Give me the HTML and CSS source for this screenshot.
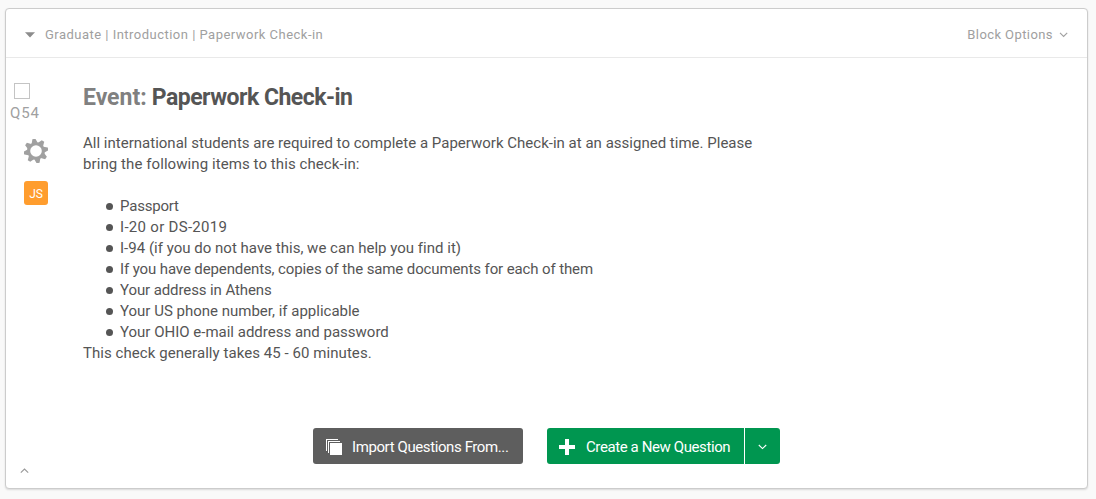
FILE: index.html
```html
<!DOCTYPE html>
<html lang="en">
<head>
<meta charset="utf-8">
<title>Survey Editor</title>
<link rel="stylesheet" href="styles.css">
</head>
<body>
<main class="block">
  <header class="block-header">
    <div class="block-title"><svg class="caret" width="10" height="6" viewBox="0 0 10 6"><path d="M0 .2H10L5 5.6Z" fill="#8c8c8c"/></svg><span class="crumbs">Graduate | Introduction | Paperwork Check-in</span></div>
    <div class="block-options"><span>Block Options</span><svg width="10" height="6" viewBox="0 0 10 6" fill="none" stroke="#a0a0a0" stroke-width="1.1"><path d="M1 .8L4.6 4.5L8.2 .8"/></svg></div>
  </header>
  <section class="question">
    <aside class="side">
      <span class="checkbox"></span>
      <span class="qid">Q54</span>
      <svg class="gear" width="24" height="24" viewBox="-12 -12 24 24">
        <circle r="7.4" fill="none" stroke="#a0a0a0" stroke-width="3.2"/>
        <g fill="#a0a0a0" transform="rotate(-10)">
          <path id="tooth" d="M-3 -8L-1.5 -12.2H1.5L3 -8Z"/>
          <use href="#tooth" transform="rotate(45)"/>
          <use href="#tooth" transform="rotate(90)"/>
          <use href="#tooth" transform="rotate(135)"/>
          <use href="#tooth" transform="rotate(180)"/>
          <use href="#tooth" transform="rotate(225)"/>
          <use href="#tooth" transform="rotate(270)"/>
          <use href="#tooth" transform="rotate(315)"/>
        </g>
      </svg>
      <span class="js">JS</span>
    </aside>
    <div class="content">
      <h1><span class="muted">Event:</span> Paperwork Check-in</h1>
      <p class="intro"><span class="line-a">All international students are required to complete a Paperwork Check-in at an assigned time. Please</span><br><span class="line-b">bring the following items to this check-in:</span></p>
      <ul>
        <li class="pass">Passport</li>
        <li class="i20">I-20 or DS-2019</li>
        <li class="i94">I-94 (if you do not have this, we can help you find it)</li>
        <li class="deps">If you have dependents, copies of the same documents for each of them</li>
        <li class="addr">Your address in Athens</li>
        <li class="phone">Your US phone number, if applicable</li>
        <li class="mail">Your OHIO e-mail address and password</li>
      </ul>
      <p class="duration">This check generally takes 45 - 60 minutes.</p>
    </div>
  </section>
  <footer class="actions">
    <button class="btn import"><svg width="18" height="16" viewBox="0 0 18 16" shape-rendering="crispEdges"><path d="M.5 12V.5H12M2.5 14V2.5H14" fill="none" stroke="#fff"/><path d="M4 4H16V16H4Z" fill="#fff"/></svg><span>Import Questions From...</span></button>
    <div class="split">
      <button class="btn create"><svg width="16" height="16" viewBox="0 0 16 16"><path d="M6 0h4v6h6v4h-6v6H6v-6H0V6h6Z" fill="#fff"/></svg><span>Create a New Question</span></button>
      <button class="btn more"><svg width="9" height="6" viewBox="0 0 9 6" fill="none" stroke="#fff" stroke-width="1.1"><path d="M.8 1L4.5 4.6L8.2 1"/></svg></button>
    </div>
  </footer>
  <svg class="collapse" width="9" height="6" viewBox="0 0 9 6" fill="none" stroke="#999" stroke-width="1.1"><path d="M.8 4.7L4.5 1L8.2 4.7"/></svg>
</main>
</body>
</html>
```
FILE: styles.css
```css
* { box-sizing: border-box; }
body {
  margin: 0;
  padding: 8px 8px 10px 5px;
  height: 499px;
  background: #f9f9f9;
  color: #555;
  font: 15px/21px Roboto, sans-serif;
}
.block {
  position: relative;
  height: 481px;
  background: #fff;
  border: 1px solid #ccc;
  border-radius: 4px;
  box-shadow: 0 1px 2px rgba(0, 0, 0, .13);
}
.block-header {
  display: flex;
  justify-content: space-between;
  align-items: center;
  height: 49px;
  padding: 3px 18px 0 19px;
  border-bottom: 1px solid #e9e9e9;
  color: #a0a0a0;
  font-size: 13px;
}
.block-title, .block-options { display: flex; align-items: center; }
.block-title { gap: 10px; }
.block-options { gap: 6px; letter-spacing: .42px; }
.crumbs { letter-spacing: .48px; }
.question { display: flex; }
.side {
  display: flex;
  flex-direction: column;
  width: 77px;
  padding: 25px 0 0 4px;
}
.checkbox {
  width: 16px;
  height: 16px;
  margin-left: 4px;
  border: 1px solid #c4c4c4;
}
.qid { margin-top: 3px; color: #a0a0a0; letter-spacing: .9px; line-height: 22px; }
.gear { margin: 15px 0 0 14px; }
.js {
  display: flex;
  align-items: center;
  justify-content: center;
  width: 24px;
  height: 24px;
  margin: 18px 0 0 14px;
  padding-top: 2px;
  background: #ff9d2e;
  border-radius: 3px;
  color: #fff;
  font-size: 12px;
}
.content { padding-top: 25px; }
h1 { margin: 0; font-size: 23px; line-height: 30px; font-weight: 700; letter-spacing: -.52px; }
.muted { color: #808080; letter-spacing: -.02px; }
p { margin: 0; }
.intro { margin-top: 20px; }
.line-a { letter-spacing: .01px; }
.line-b { letter-spacing: .08px; }
ul { margin: 21px 0 0; padding: 0; list-style: none; }
li { display: flex; align-items: center; white-space: pre; }
li::before {
  content: "";
  width: 7px;
  height: 7px;
  margin: -1px 7px 0 23px;
  border-radius: 50%;
  background: #555;
}
.pass { letter-spacing: -.2px; }
.i20 { letter-spacing: .3px; }
.i94 { letter-spacing: .015px; }
.deps { letter-spacing: -.115px; }
.addr { letter-spacing: -.1px; }
.duration { letter-spacing: .06px; }
.actions { display: flex; gap: 24px; margin: 64px 0 0 307px; }
.btn {
  display: flex;
  align-items: center;
  height: 36px;
  padding: 0 0 0 13px;
  border: 0;
  color: #fff;
  font: 15px/21px Roboto, sans-serif;
  white-space: nowrap;
}
.btn span { padding-top: 2px; letter-spacing: -.4px; }
.btn svg { margin-top: 2px; }
.import { width: 210px; gap: 8px; border-radius: 3px; background: #5e5e5e; }
.split { display: flex; gap: 1px; }
.create { width: 197px; gap: 11px; padding-left: 12px; border-radius: 3px 0 0 3px; background: #009650; }
.more { width: 35px; padding: 0 0 0 13px; border-radius: 0 3px 3px 0; background: #009650; }
.collapse { position: absolute; left: 14px; bottom: 14px; }
```
